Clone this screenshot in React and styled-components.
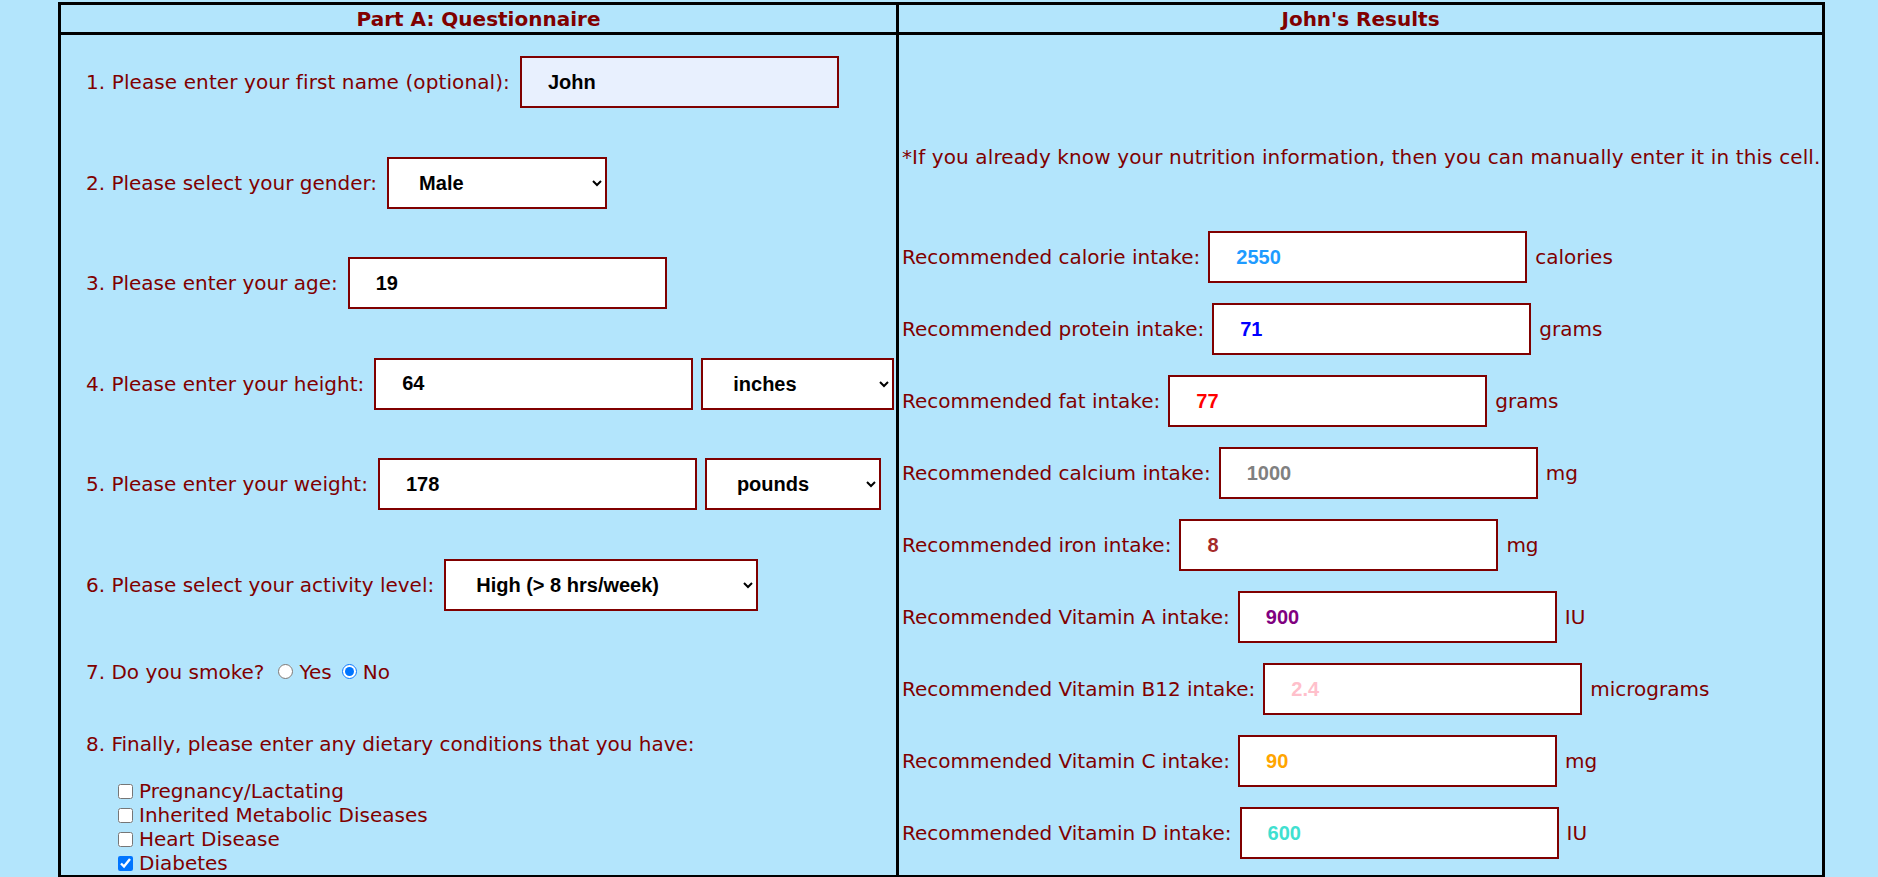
import React from "react";
import styled, { createGlobalStyle } from "styled-components";

const GlobalStyle = createGlobalStyle`
  html, body {
    margin: 0;
    background: #b3e5fc;
  }
  body {
    font-family: Verdana, "DejaVu Sans", sans-serif;
    font-size: 20px;
    line-height: 24px;
    color: #800000;
  }
  * { box-sizing: border-box; }
`;

const Sheet = styled.div`
  display: grid;
  grid-template-columns: 838px 923px;
  width: 1767px;
  margin: 2px 0 0 58px;
  border: 3px solid #000;
  box-sizing: border-box;
`;

const HeadCell = styled.div`
  height: 30px;
  display: flex;
  align-items: center;
  justify-content: center;
  font-weight: bold;
  border-bottom: 3px solid #000;
  border-right: ${(p) => (p.$divider ? "3px solid #000" : "0")};
`;

const QuestionCell = styled.div`
  border-right: 3px solid #000;
  padding: 21px 0 0 25px;
  display: flex;
  flex-direction: column;
  gap: 48.6px;
`;

const Row = styled.div`
  display: flex;
  align-items: center;
  gap: 8px;
  white-space: nowrap;
`;

const Label = styled.span`
  letter-spacing: ${(p) => p.$ls || 0}px;
  margin-right: ${(p) => p.$mr || 0}px;
`;

const Field = styled.input`
  width: ${(p) => p.$w || 319}px;
  height: 52px;
  border: 2px solid #800000;
  padding: 0 6px 0 26px;
  margin: 0;
  background: ${(p) => p.$bg || "#fff"};
  color: ${(p) => p.$color || "#000"};
  font-family: "Liberation Sans", Arial, sans-serif;
  font-weight: bold;
  font-size: 20px;
  outline: none;
`;

const Picker = styled.select`
  width: ${(p) => p.$w}px;
  height: 52px;
  border: 2px solid #800000;
  border-radius: 0;
  padding: 0 4px 0 26px;
  margin: 0;
  background: #fff;
  color: #000;
  font-family: "Liberation Sans", Arial, sans-serif;
  font-weight: bold;
  font-size: 20px;
  outline: none;
`;

const Radio = styled.input`
  width: 15px;
  height: 15px;
  margin: 0 6px 0 0;
`;

const Choice = styled.label`
  display: inline-flex;
  align-items: center;
  margin-left: ${(p) => p.$ml || 0}px;
`;

const ConditionBlock = styled.div`
  display: flex;
  flex-direction: column;
`;

const CheckList = styled.div`
  display: flex;
  flex-direction: column;
  padding-left: 32px;
  margin-top: 23px;
`;

const CheckItem = styled.label`
  display: flex;
  align-items: center;
  height: 24px;
`;

const Box = styled.input`
  width: 15px;
  height: 15px;
  margin: 0 6px 0 0;
`;

const ResultsCell = styled.div`
  padding: 110px 0 0 3px;
  display: flex;
  flex-direction: column;
`;

const Note = styled.div`
  white-space: nowrap;
  letter-spacing: 0.12px;
`;

const ResultList = styled.div`
  display: flex;
  flex-direction: column;
  gap: 20px;
  margin-top: 62px;
`;

const results = [
  ["Recommended calorie intake:", "2550", "calories", "#1e9bff"],
  ["Recommended protein intake:", "71", "grams", "#0000ff"],
  ["Recommended fat intake:", "77", "grams", "#ff0000"],
  ["Recommended calcium intake:", "1000", "mg", "#808080"],
  ["Recommended iron intake:", "8", "mg", "#a52a2a"],
  ["Recommended Vitamin A intake:", "900", "IU", "#800080"],
  ["Recommended Vitamin B12 intake:", "2.4", "micrograms", "#ffc0cb"],
  ["Recommended Vitamin C intake:", "90", "mg", "#ffa500"],
  ["Recommended Vitamin D intake:", "600", "IU", "#40e0d0"],
];

const conditions = [
  ["Pregnancy/Lactating", false],
  ["Inherited Metabolic Diseases", false],
  ["Heart Disease", false],
  ["Diabetes", true],
];

export default function App() {
  return (
    <>
      <GlobalStyle />
      <Sheet>
        <HeadCell $divider>Part A: Questionnaire</HeadCell>
        <HeadCell>John's Results</HeadCell>

        <QuestionCell>
          <Row>
            <Label $ls={0.1} $mr={2}>1. Please enter your first name (optional):</Label>
            <Field $w={319} $bg="#e8f0fe" defaultValue="John" />
          </Row>
          <Row>
            <Label $mr={2}>2. Please select your gender:</Label>
            <Picker $w={220} defaultValue="Male">
              <option>Male</option>
              <option>Female</option>
            </Picker>
          </Row>
          <Row>
            <Label $mr={2}>3. Please enter your age:</Label>
            <Field defaultValue="19" />
          </Row>
          <Row>
            <Label $mr={2}>4. Please enter your height:</Label>
            <Field defaultValue="64" />
            <Picker $w={193} defaultValue="inches">
              <option>inches</option>
              <option>centimeters</option>
            </Picker>
          </Row>
          <Row>
            <Label $mr={2}>5. Please enter your weight:</Label>
            <Field defaultValue="178" />
            <Picker $w={176} defaultValue="pounds">
              <option>pounds</option>
              <option>kilograms</option>
            </Picker>
          </Row>
          <Row>
            <Label $mr={2}>6. Please select your activity level:</Label>
            <Picker $w={314} defaultValue="High (> 8 hrs/week)">
              <option>Sedentary (none)</option>
              <option>Low (&lt; 3 hrs/week)</option>
              <option>Moderate (3-8 hrs/week)</option>
              <option>High (&gt; 8 hrs/week)</option>
            </Picker>
          </Row>
          <Row>
            <Label>7. Do you smoke?</Label>
            <Choice $ml={6}>
              <Radio type="radio" name="smoke" />
              Yes
            </Choice>
            <Choice $ml={2}>
              <Radio type="radio" name="smoke" defaultChecked />
              No
            </Choice>
          </Row>
          <ConditionBlock>
            <Label>8. Finally, please enter any dietary conditions that you have:</Label>
            <CheckList>
              {conditions.map(([name, checked]) => (
                <CheckItem key={name}>
                  <Box type="checkbox" defaultChecked={checked} />
                  {name}
                </CheckItem>
              ))}
            </CheckList>
          </ConditionBlock>
        </QuestionCell>

        <ResultsCell>
          <Note>
            *If you already know your nutrition information, then you can manually enter it in this cell.
          </Note>
          <ResultList>
            {results.map(([label, value, unit, color]) => (
              <Row key={label}>
                <Label>{label}</Label>
                <Field $color={color} defaultValue={value} />
                <Label>{unit}</Label>
              </Row>
            ))}
          </ResultList>
        </ResultsCell>
      </Sheet>
    </>
  );
}
